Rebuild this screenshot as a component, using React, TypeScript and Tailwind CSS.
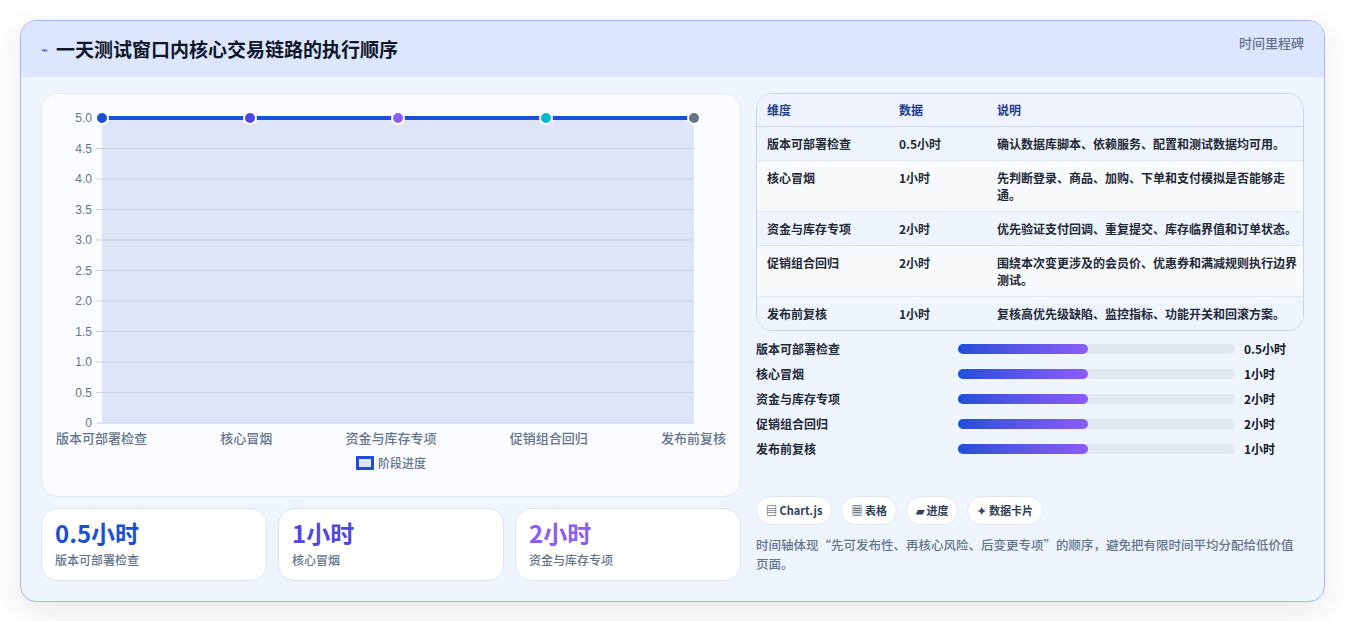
const FONT = { fontFamily: '"Noto Sans CJK SC", "Noto Sans", sans-serif' };

const stages = [
  { name: '版本可部署检查', hours: '0.5小时', desc: '确认数据库脚本、依赖服务、配置和测试数据均可用。', color: '#1d4ed8' },
  { name: '核心冒烟', hours: '1小时', desc: '先判断登录、商品、加购、下单和支付模拟是否能够走通。', color: '#4f46e5' },
  { name: '资金与库存专项', hours: '2小时', desc: '优先验证支付回调、重复提交、库存临界值和订单状态。', color: '#8b5cf6' },
  { name: '促销组合回归', hours: '2小时', desc: '围绕本次变更涉及的会员价、优惠券和满减规则执行边界测试。', color: '#06b6d4' },
  { name: '发布前复核', hours: '1小时', desc: '复核高优先级缺陷、监控指标、功能开关和回滚方案。', color: '#64748b' },
];

function Chart() {
  // plot area inside svg
  const x0 = 60, x1 = 652, yTop = 24, yBot = 329;
  const ticks = ['5.0', '4.5', '4.0', '3.5', '3.0', '2.5', '2.0', '1.5', '1.0', '0.5', '0'];
  const step = (yBot - yTop) / 10;
  const xs = stages.map((_, i) => x0 + ((x1 - x0) / 4) * i);
  return (
    <svg width="698" height="338" className="block">
      <rect x={x0} y={yTop} width={x1 - x0} height={yBot - yTop} fill="#dfe5f8" />
      {ticks.map((t, i) => (
        <g key={t}>
          <line x1={x0 - 6} x2={x1} y1={yTop + step * i} y2={yTop + step * i} stroke="#c7d2e8" strokeWidth="1" />
          <text x={x0 - 10} y={yTop + step * i + 4} textAnchor="end" fontSize="12" fill="#64748b" fontFamily="Liberation Sans, sans-serif">{t}</text>
        </g>
      ))}
      <line x1={x0} x2={x1} y1={yTop} y2={yTop} stroke="#1d4ed8" strokeWidth="4" />
      {xs.map((x, i) => (
        <circle key={i} cx={x} cy={yTop} r="6" fill={stages[i].color} stroke="#fff" strokeWidth="2" />
      ))}
    </svg>
  );
}

export default function App() {
  return (
    <div className="min-h-[621px] bg-white p-5" style={FONT}>
      <div className="overflow-hidden rounded-2xl border border-[#a5b4fc] bg-[#eff5ff] shadow-[0_10px_30px_rgba(30,41,80,0.10)]">
        <div className="flex h-[56px] items-center justify-between bg-[#dde6ff] pl-5 pr-5">
          <div className="flex items-center gap-2">
            <span className="text-[12px] text-[#4f46e5]">⌁</span>
            <h1 className="text-[19px] font-bold text-[#0f172a]">一天测试窗口内核心交易链路的执行顺序</h1>
          </div>
          <span className="-mt-3 text-[13px] font-medium text-[#64748b]">时间里程碑</span>
        </div>
        <div className="flex gap-[15px] px-5 pb-5 pt-[16px]">
          <div className="flex w-[700px] flex-col gap-[11px]">
            <div className="h-[404px] rounded-2xl border border-[#e2e8f0] bg-[#fafcff]">
              <Chart />
              <div className="-mt-[4px] flex justify-between px-[14px] text-[13px] font-medium text-[#64748b]">
                {stages.map((s) => <span key={s.name}>{s.name}</span>)}
              </div>
              <div className="mt-[6px] flex items-center justify-center gap-1 text-[12px] font-medium text-[#64748b]">
                <span className="h-[14px] w-[18px] border-[3px] border-[#1d4ed8] bg-[#dfe5f8]" />
                阶段进度
              </div>
            </div>
            <div className="grid grid-cols-3 gap-[11px]">
              {stages.slice(0, 3).map((s, i) => (
                <div key={s.name} className="h-[73px] rounded-2xl border border-[#dbe4f5] bg-white px-[13px] pt-[8px]">
                  <div className={`text-[24px] font-bold leading-[32px] ${i === 0 ? 'text-[#1d4ed8]' : i === 1 ? 'text-[#4f46e5]' : 'text-[#8b5cf6]'}`}>{s.hours}</div>
                  <div className="mt-[2px] text-[12px] font-medium text-[#64748b]">{s.name}</div>
                </div>
              ))}
            </div>
          </div>
          <div className="flex flex-1 flex-col">
            <div className="overflow-hidden rounded-2xl border border-[#cbd5e1] text-[12px]">
              <div className="grid h-[33px] grid-cols-[132px_98px_1fr] items-center border-b border-[#cbd5e1] bg-[#eef3ff] pl-[10px] pr-[4px] font-bold text-[#1e3a8a]">
                <span>维度</span><span>数据</span><span>说明</span>
              </div>
              {stages.map((s, i) => (
                <div key={s.name} className={`grid grid-cols-[132px_98px_1fr] border-b border-[#e2e8f0] pl-[10px] pr-[4px] py-[8px] font-semibold leading-[17px] text-[#1f2937] last:border-b-0 ${i % 2 === 0 ? 'bg-[#eff5ff]' : 'bg-[#f8fafc]'}`}>
                  <span>{s.name}</span><span>{s.hours}</span><span>{s.desc}</span>
                </div>
              ))}
            </div>
            <div className="mt-[9px] flex flex-col gap-[7px]">
              {stages.map((s) => (
                <div key={s.name} className="flex h-[18px] items-center text-[12px] font-semibold text-[#1f2937]">
                  <span className="w-[202px]">{s.name}</span>
                  <div className="h-[10px] w-[277px] rounded-full bg-[#e2e8f0]">
                    <div className="h-full w-[47%] rounded-full bg-gradient-to-r from-[#1d4ed8] to-[#8b5cf6]" />
                  </div>
                  <span className="ml-[9px] font-bold text-[#111827]">{s.hours}</span>
                </div>
              ))}
            </div>
            <div className="mt-[38px] flex gap-[9px] text-[11px] font-semibold text-[#334155]">
              {['▤ Chart.js', '▦ 表格', '▰ 进度', '✦ 数据卡片'].map((c) => (
                <span key={c} className="rounded-full border border-[#e2e8f0] bg-white px-[9px] py-[5px]">{c}</span>
              ))}
            </div>
            <p className="mt-[10px] text-[12.5px] font-medium leading-[19px] text-[#64748b]">
              时间轴体现“先可发布性、再核心风险、后变更专项”的顺序，避免把有限时间平均分配给低价值页面。
            </p>
          </div>
        </div>
      </div>
    </div>
  );
}
